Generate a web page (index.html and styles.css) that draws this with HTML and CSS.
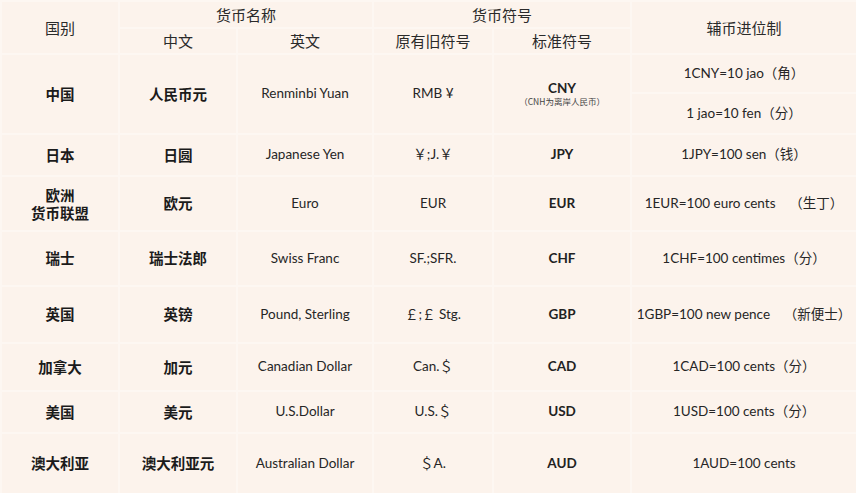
FILE: index.html
```html
<!DOCTYPE html>
<html lang="zh">
<head>
<meta charset="utf-8">
<title>货币符号</title>
<link rel="stylesheet" href="styles.css">
</head>
<body>
<table class="fx">
  <colgroup>
    <col class="c1"><col class="c2"><col class="c3"><col class="c4"><col class="c5"><col class="c6">
  </colgroup>
  <thead>
    <tr class="h1">
      <th rowspan="2" class="hd">国别</th>
      <th colspan="2" class="hd top">货币名称</th>
      <th colspan="2" class="hd top">货币符号</th>
      <th rowspan="2" class="hd">辅币进位制</th>
    </tr>
    <tr class="h2">
      <th class="hd sub">中文</th>
      <th class="hd sub">英文</th>
      <th class="hd sub">原有旧符号</th>
      <th class="hd sub">标准符号</th>
    </tr>
  </thead>
  <tbody>
    <tr class="r-cn1">
      <td rowspan="2" class="cn">中国</td>
      <td rowspan="2" class="cn">人民币元</td>
      <td rowspan="2" class="en">Renminbi Yuan</td>
      <td rowspan="2" class="en">RMB ¥</td>
      <td rowspan="2" class="code">CNY<span class="note">（CNH为离岸人民币）</span></td>
      <td class="sub-unit">1CNY=10 jao（角）</td>
    </tr>
    <tr class="r-cn2">
      <td class="sub-unit">1 jao=10 fen（分）</td>
    </tr>
    <tr class="r-jp">
      <td class="cn">日本</td>
      <td class="cn">日圆</td>
      <td class="en">Japanese Yen</td>
      <td class="en">￥;J.￥</td>
      <td class="code">JPY</td>
      <td class="sub-unit">1JPY=100 sen（钱）</td>
    </tr>
    <tr class="r-eu">
      <td class="cn"><span class="line">欧洲</span><span class="line">货币联盟</span></td>
      <td class="cn">欧元</td>
      <td class="en">Euro</td>
      <td class="en">EUR</td>
      <td class="code">EUR</td>
      <td class="sub-unit">1EUR=100 euro cents&nbsp;&nbsp;&nbsp;&nbsp;（生丁）</td>
    </tr>
    <tr class="r-ch">
      <td class="cn">瑞士</td>
      <td class="cn">瑞士法郎</td>
      <td class="en">Swiss Franc</td>
      <td class="en">SF.;SFR.</td>
      <td class="code">CHF</td>
      <td class="sub-unit">1CHF=100 centimes（分）</td>
    </tr>
    <tr class="r-uk">
      <td class="cn">英国</td>
      <td class="cn">英镑</td>
      <td class="en">Pound, Sterling</td>
      <td class="en">￡;￡ Stg.</td>
      <td class="code">GBP</td>
      <td class="sub-unit">1GBP=100 new pence&nbsp;&nbsp;&nbsp;&nbsp;（新便士）</td>
    </tr>
    <tr class="r-ca">
      <td class="cn">加拿大</td>
      <td class="cn">加元</td>
      <td class="en">Canadian Dollar</td>
      <td class="en">Can.＄</td>
      <td class="code">CAD</td>
      <td class="sub-unit">1CAD=100 cents（分）</td>
    </tr>
    <tr class="r-us">
      <td class="cn">美国</td>
      <td class="cn">美元</td>
      <td class="en">U.S.Dollar</td>
      <td class="en">U.S.＄</td>
      <td class="code">USD</td>
      <td class="sub-unit">1USD=100 cents（分）</td>
    </tr>
    <tr class="r-au">
      <td class="cn">澳大利亚</td>
      <td class="cn">澳大利亚元</td>
      <td class="en">Australian Dollar</td>
      <td class="en">＄A.</td>
      <td class="code">AUD</td>
      <td class="sub-unit">1AUD=100 cents</td>
    </tr>
  </tbody>
</table>
</body>
</html>
```
FILE: styles.css
```css
html, body {
  margin: 0;
  padding: 0;
  background: #fcf3ec;
  overflow: hidden;
}

.fx {
  width: 856px;
  border-collapse: collapse;
  table-layout: fixed;
  background: #fcf3ec;
  color: #1b1b1b;
  font-family: "Noto Sans CJK SC", "Noto Sans", sans-serif;
}

.c1 { width: 118px; }
.c2 { width: 118px; }
.c3 { width: 136px; }
.c4 { width: 120px; }
.c5 { width: 138px; }
.c6 { width: 226px; }

.fx th, .fx td {
  border: 2px solid #fdf7f2;
  text-align: center;
  vertical-align: middle;
  padding: 0;
  line-height: 1.15;
}

.hd {
  font-weight: 400;
  font-size: 15px;
  color: #2a2a2a;
}

.h1 { height: 27px; }
.h2 { height: 26px; }
.sub { padding-top: 0; }

.cn {
  font-weight: 700;
  font-size: 14.5px;
  line-height: 1.2;
}

.line {
  display: block;
  line-height: 18px;
  height: 18px;
}

.en {
  font-family: "Lato", "Open Sans", "Noto Sans CJK SC", sans-serif;
  font-size: 13.5px;
  color: #262626;
}

.code {
  font-family: "Lato", "Open Sans", sans-serif;
  font-weight: 700;
  font-size: 13.5px;
  color: #222;
  line-height: 1.1;
}

.note {
  display: block;
  font-family: "Noto Sans CJK SC", sans-serif;
  font-weight: 400;
  font-size: 8.5px;
  color: #444;
  margin-top: 1px;
}

.sub-unit {
  font-family: "Lato", "Open Sans", "Noto Sans CJK SC", sans-serif;
  font-size: 13.5px;
  color: #262626;
}

.r-cn1 { height: 39px; }
.r-cn2 { height: 41px; }
.r-jp { height: 42px; }
.r-eu { height: 55px; }
.r-ch { height: 55px; }
.r-uk { height: 57px; }
.r-ca { height: 48px; }
.r-us { height: 42px; }
.r-au { height: 61px; }
```
